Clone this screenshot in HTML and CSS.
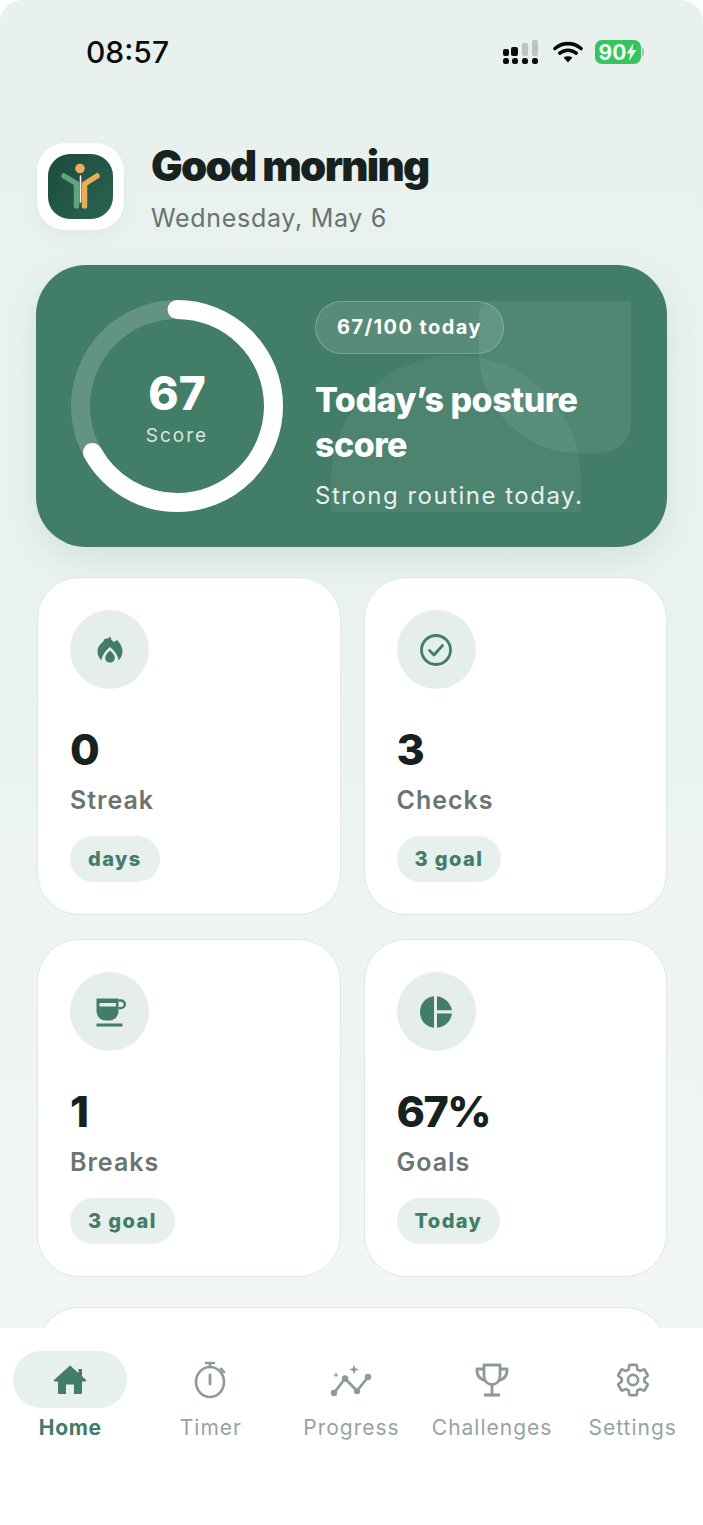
FILE: index.html
```html
<!DOCTYPE html>
<html>
<head>
    <title>Posture Home</title>
    <link rel="stylesheet" href="styles.css">
</head>
<body>
    <div class="screen">
        <div class="content">
            <!-- Status bar -->
            <div class="status">
                <span class="clock">08:57</span>
                <div class="status-icons">
                    <svg width="38" height="26" viewBox="0 0 38 26">
                        <g fill="#0b0b0b">
                            <rect x="1" y="10" width="6" height="7" rx="2"/>
                            <rect x="9" y="8" width="7" height="9" rx="2"/>
                            <rect x="1" y="19" width="6" height="6" rx="2.5"/>
                            <rect x="10" y="19" width="6" height="6" rx="2.5"/>
                            <rect x="20" y="19" width="6" height="6" rx="2.5"/>
                            <rect x="30" y="19" width="6" height="6" rx="2.5"/>
                        </g>
                        <g fill="#bcc4c1">
                            <rect x="20" y="4" width="6" height="13" rx="2"/>
                            <rect x="30" y="1" width="6" height="16" rx="2"/>
                        </g>
                    </svg>
                    <svg class="wifi" width="30" height="24" viewBox="0 0 30 24">
                        <path d="M2 8.5c7.500-6.500 18.500-6.500 26 0M6.800 13.200c4.800-4 11.600-4 16.400 0" fill="none" stroke="#0b0b0b" stroke-width="3.600" stroke-linecap="round"/>
                        <path d="M10.500 17.500c2.800-1.800 6.200-1.800 9 0L15 22.500z" fill="#0b0b0b"/>
                    </svg>
                    <div class="battery">
                        <span class="battery-fill">90<svg width="11" height="18" viewBox="0 0 11 18"><path d="M7.500 0 .5 10.500h3.700L3 18l7.500-11H6.500z" fill="#dff5e5"/></svg></span>
                        <span class="battery-tip"></span>
                    </div>
                </div>
            </div>

            <!-- Greeting -->
            <div class="header">
                <div class="logo-box">
                    <svg class="logo" width="65" height="65" viewBox="0 0 65 65">
                        <defs>
                            <linearGradient id="logo-bg" x1="0" y1="0" x2="1" y2="1">
                                <stop offset="0" stop-color="#1c4a3c"/>
                                <stop offset="1" stop-color="#2a6452"/>
                            </linearGradient>
                        </defs>
                        <rect width="65" height="65" rx="22" fill="url(#logo-bg)"/>
                        <circle cx="32" cy="14.500" r="4.800" fill="#e9ae57"/>
                        <path d="M16 22 28.500 29.500V52" fill="none" stroke="#5fa57f" stroke-width="5.500" stroke-linecap="round" stroke-linejoin="round"/>
                        <path d="M49 22 36.500 30V52" fill="none" stroke="#e9ae57" stroke-width="5.500" stroke-linecap="round" stroke-linejoin="round"/>
                        <path d="M32.500 22V48" stroke="#f4f4ee" stroke-width="1.600" stroke-linecap="round"/>
                    </svg>
                </div>
                <div class="greeting">
                    <h1>Good morning</h1>
                    <p>Wednesday, May 6</p>
                </div>
            </div>

            <!-- Score card -->
            <div class="hero">
                <div class="deco deco-one"></div>
                <div class="deco deco-two"></div>
                <div class="ring">
                    <svg width="212" height="212" viewBox="0 0 212 212">
                        <circle class="ring-track" cx="106" cy="106" r="96.500"/>
                        <circle class="ring-value" cx="106" cy="106" r="96.500" pathLength="100" stroke-dasharray="67 100" transform="rotate(-90 106 106)"/>
                    </svg>
                    <div class="ring-text">
                        <span class="ring-num">67</span>
                        <span class="ring-label">Score</span>
                    </div>
                </div>
                <div class="hero-text">
                    <span class="hero-pill">67/100 today</span>
                    <h2>Today’s posture score</h2>
                    <p>Strong routine today.</p>
                </div>
            </div>

            <!-- Stats -->
            <div class="stats">
                <div class="card">
                    <div class="card-icon">
                        <svg width="30" height="30" viewBox="0 0 30 30">
                            <path d="M15.500 1.500c.3 2.800 1.500 4.600 3.600 5.400l3-1.900c3 3.200 5.400 7 5.400 11.300 0 3.800-1.600 7-4.100 9.200-.1-4.600-3.700-9.800-8.400-13.600-4.700 3.800-8.300 9-8.400 13.600-2.500-2.200-4.100-5.400-4.100-9.200 0-6.500 6.300-9 6.900-12.300 2.400-.2 4.600-1.200 6.100-2.500z" fill="#417d67"/>
                            <path d="M15 15.500c2.700 2.500 4.800 4.900 4.800 7.400 0 2.700-2.100 4.600-4.800 4.600s-4.800-1.900-4.800-4.600c0-2.500 2.100-4.900 4.800-7.400z" fill="#417d67"/>
                        </svg>
                    </div>
                    <div class="card-value">0</div>
                    <div class="card-label">Streak</div>
                    <span class="chip">days</span>
                </div>
                <div class="card">
                    <div class="card-icon">
                        <svg width="34" height="34" viewBox="0 0 34 34">
                            <circle cx="17" cy="17" r="14.500" fill="none" stroke="#417d67" stroke-width="2.800"/>
                            <path d="M10.500 17.500l4.500 4.500 8.500-9.500" fill="none" stroke="#417d67" stroke-width="2.800" stroke-linecap="round" stroke-linejoin="round"/>
                        </svg>
                    </div>
                    <div class="card-value">3</div>
                    <div class="card-label">Checks</div>
                    <span class="chip">3 goal</span>
                </div>
                <div class="card">
                    <div class="card-icon">
                        <svg width="34" height="34" viewBox="0 0 34 34">
                            <path d="M3.500 3.500h22v12c0 6-4 10-9 10h-4c-5 0-9-4-9-10z" fill="#417d67"/>
                            <rect x="6.500" y="8" width="16.500" height="3.500" fill="#e6eeeb"/>
                            <path d="M25.500 5.500h2.500a3.800 3.800 0 0 1 0 7.600h-2.500" fill="none" stroke="#417d67" stroke-width="2.400"/>
                            <rect x="3.500" y="28.500" width="26" height="3" fill="#417d67"/>
                        </svg>
                    </div>
                    <div class="card-value">1</div>
                    <div class="card-label">Breaks</div>
                    <span class="chip">3 goal</span>
                </div>
                <div class="card">
                    <div class="card-icon">
                        <svg width="34" height="34" viewBox="0 0 34 34">
                            <path d="M15 1.200v31.600C7 32 1 25.500 1 17S7 2 15 1.200z" fill="#417d67"/>
                            <path d="M18 1.200C25.500 2 31.500 8 33 15.200H18z" fill="#417d67"/>
                            <path d="M18 18.500h15C32 26 26 32 18 32.800z" fill="#417d67"/>
                        </svg>
                    </div>
                    <div class="card-value">67%</div>
                    <div class="card-label">Goals</div>
                    <span class="chip">Today</span>
                </div>
            </div>
            <div class="card card-next"></div>
        </div>

        <!-- Bottom nav -->
        <div class="nav">
            <div class="nav-item active">
                <div class="nav-icon">
                    <svg width="34" height="32" viewBox="0 0 34 32">
                        <path d="M17 1.500 25.500 9V5h3.500v7.300l4 3.700c.5.600.2 1.400-.6 1.400H29v11.100c0 1-.8 1.500-1.500 1.500H21V20.500h-8V30H6.500C5.800 30 5 29.500 5 28.500V17.400H1.600c-.8 0-1.100-.8-.6-1.400z" fill="#417d67"/>
                    </svg>
                </div>
                <span>Home</span>
            </div>
            <div class="nav-item">
                <div class="nav-icon">
                    <svg width="36" height="38" viewBox="0 0 36 38">
                        <g fill="none" stroke="#8f9a97" stroke-width="2.600" stroke-linecap="round">
                            <ellipse cx="17" cy="21" rx="14" ry="15"/>
                            <path d="M13 2h8M17 2v4M28 8l3 3"/>
                            <path d="M17 14v9" stroke-width="2.800"/>
                        </g>
                    </svg>
                </div>
                <span>Timer</span>
            </div>
            <div class="nav-item">
                <div class="nav-icon">
                    <svg width="42" height="36" viewBox="0 0 42 36">
                        <path d="M4 31 15 16.500 27 29 38 15" fill="none" stroke="#8f9a97" stroke-width="2.800" stroke-linecap="round" stroke-linejoin="round"/>
                        <g fill="#8f9a97">
                            <circle cx="4" cy="31" r="3.200"/>
                            <circle cx="15" cy="16.500" r="3.200"/>
                            <circle cx="27" cy="29" r="3.200"/>
                            <circle cx="38" cy="15" r="3.200"/>
                            <path d="M24 2.500l1.300 3.700L29 7.500l-3.700 1.300L24 12.500l-1.300-3.700L19 7.500l3.700-1.300z"/>
                            <path d="M6 10l.7 2.300 2.300.7-2.300.7L6 16l-.7-2.300L3 13l2.300-.7z"/>
                        </g>
                    </svg>
                </div>
                <span>Progress</span>
            </div>
            <div class="nav-item">
                <div class="nav-icon">
                    <svg width="34" height="34" viewBox="0 0 34 34">
                        <g fill="none" stroke="#8f9a97" stroke-width="2.800" stroke-linejoin="round">
                            <path d="M9 2h16v11c0 5-3.500 8.500-8 8.500S9 18 9 13z"/>
                            <path d="M9 6H2c-.3 6 2.500 10.500 9 11.500M25 6h7c.3 6-2.500 10.500-9 11.500"/>
                            <path d="M17 21.500V31"/>
                            <path d="M9 32h16" stroke-width="3.200"/>
                        </g>
                    </svg>
                </div>
                <span>Challenges</span>
            </div>
            <div class="nav-item">
                <div class="nav-icon">
                    <svg width="38" height="38" viewBox="0 0 24 24">
                        <g fill="none" stroke="#8f9a97" stroke-width="1.700">
                            <path d="M19.140 12.940c.04-.3.06-.61.06-.94 0-.32-.02-.64-.07-.94l2.030-1.580a.49.49 0 0 0 .12-.61l-1.920-3.320a.488.488 0 0 0-.59-.22l-2.390.96c-.5-.38-1.030-.7-1.620-.94l-.36-2.540a.484.484 0 0 0-.48-.41h-3.840c-.24 0-.43.17-.47.41l-.36 2.540c-.59.24-1.130.57-1.620.94l-2.390-.96c-.22-.08-.47 0-.59.22L2.740 8.870c-.12.21-.08.47.12.61l2.030 1.580c-.05.3-.09.63-.09.94s.02.64.07.94l-2.030 1.580a.49.49 0 0 0-.12.61l1.920 3.320c.12.22.37.29.59.22l2.390-.96c.5.38 1.030.7 1.620.94l.36 2.540c.05.24.24.41.48.41h3.840c.24 0 .44-.17.47-.41l.36-2.540c.59-.24 1.130-.56 1.620-.94l2.390.96c.22.08.47 0 .59-.22l1.920-3.320c.12-.22.07-.47-.12-.61l-2.010-1.580z"/>
                            <circle cx="12" cy="12" r="3.200"/>
                        </g>
                    </svg>
                </div>
                <span>Settings</span>
            </div>
        </div>
    </div>
</body>
</html>
```

FILE: styles.css
```css
* {
    box-sizing: border-box;
}
html, body {
    margin: 0;
    height: 100%;
    background: #fff;
    font-family: Inter, "Noto Sans", sans-serif;
}
.screen {
    height: 1525px;
    display: flex;
    flex-direction: column;
    overflow: hidden;
    border-radius: 22px 22px 0 0;
    background: linear-gradient(180deg, #e8f1ee 0%, #e9f2ef 40%, #f2f6f4 86%);
}
.content {
    flex: 1;
    min-height: 0;
    overflow: hidden;
    padding: 0 36px;
}

/* Status bar */
.status {
    height: 104px;
    display: flex;
    align-items: center;
    justify-content: space-between;
    padding: 0 23px 0 50px;
}
.clock {
    font-size: 30px;
    font-weight: 500;
    color: #0b0b0b;
}
.status-icons {
    display: flex;
    align-items: center;
    gap: 12px;
}
.wifi {
    margin-left: 1px;
}
.battery {
    display: flex;
    align-items: center;
    gap: 1px;
}
.battery-fill {
    width: 46px;
    height: 24px;
    border-radius: 7px;
    background: #35c45f;
    color: #f2fbf4;
    font-size: 21px;
    font-weight: 700;
    display: flex;
    align-items: center;
    justify-content: center;
}
.battery-tip {
    width: 2px;
    height: 8px;
    border-radius: 0 2px 2px 0;
    background: #b5bdba;
}

/* Greeting */
.header {
    margin-top: 39px;
    display: flex;
    align-items: flex-start;
    gap: 27px;
    padding-left: 1px;
}
.logo-box {
    width: 87px;
    height: 87px;
    border-radius: 28px;
    background: #fff;
    display: flex;
    align-items: center;
    justify-content: center;
    box-shadow: 0 4px 14px rgba(65, 125, 103, 0.06);
}
.logo {
    display: block;
}
.greeting h1 {
    margin: 0;
    font-size: 42px;
    line-height: 46px;
    font-weight: 900;
    letter-spacing: -1.7px;
    color: #17211e;
}
.greeting p {
    margin: 14px 0 0;
    font-size: 25px;
    line-height: 30px;
    letter-spacing: 0.7px;
    color: #66736f;
}

/* Score card */
.hero {
    margin-top: 32px;
    height: 282px;
    position: relative;
    overflow: hidden;
    border-radius: 50px;
    background: #417d67;
    box-shadow: 0 12px 30px rgba(65, 125, 103, 0.12);
    display: flex;
    align-items: center;
    gap: 32px;
    padding-left: 35px;
}
.deco {
    position: absolute;
}
.deco-one {
    left: 443px;
    top: 36px;
    width: 152px;
    height: 152px;
    border-radius: 12px 0 30px 100px;
    background: rgba(255, 255, 255, 0.08);
}
.deco-two {
    left: 295px;
    top: 90px;
    width: 250px;
    height: 157px;
    border-radius: 125px 125px 4px 4px;
    background: rgba(255, 255, 255, 0.06);
}
.ring {
    display: grid;
    flex: none;
    position: relative;
}
.ring svg, .ring-text {
    grid-area: 1 / 1;
}
.ring svg {
    display: block;
}
.ring-track, .ring-value {
    fill: none;
    stroke-width: 19;
}
.ring-track {
    stroke: rgba(255, 255, 255, 0.18);
}
.ring-value {
    stroke: #fff;
    stroke-linecap: round;
}
.ring-text {
    display: flex;
    flex-direction: column;
    align-items: center;
    justify-content: center;
    color: #fff;
}
.ring-num {
    font-size: 46px;
    line-height: 50px;
    font-weight: 800;
    margin-top: 3px;
}
.ring-label {
    font-size: 19px;
    line-height: 24px;
    letter-spacing: 2px;
    margin-top: 6px;
    color: rgba(255, 255, 255, 0.82);
}
.hero-text {
    position: relative;
    width: 290px;
    color: #fff;
}
.hero-pill {
    display: inline-block;
    height: 53px;
    line-height: 51px;
    padding: 0 21px;
    border: 1px solid rgba(255, 255, 255, 0.2);
    border-radius: 27px;
    background: rgba(255, 255, 255, 0.12);
    font-size: 20px;
    font-weight: 700;
    letter-spacing: 1.4px;
}
.hero-text h2 {
    margin: 23px 0 0;
    font-size: 34px;
    line-height: 45px;
    font-weight: 800;
    letter-spacing: -0.5px;
}
.hero-text p {
    margin: 14px 0 0;
    font-size: 24px;
    line-height: 30px;
    letter-spacing: 1.5px;
    white-space: nowrap;
    color: rgba(255, 255, 255, 0.9);
}

/* Stats */
.stats {
    margin-top: 30px;
    padding-left: 1px;
    display: grid;
    grid-template-columns: 1fr 1fr;
    grid-auto-rows: 338px;
    gap: 24px 23px;
}
.card {
    background: #fff;
    border: 1px solid #dfe8e5;
    border-radius: 42px;
    padding: 32px;
}
.card-icon {
    width: 79px;
    height: 79px;
    border-radius: 50%;
    background: #e6eeeb;
    display: flex;
    align-items: center;
    justify-content: center;
}
.card-value {
    margin-top: 36px;
    font-size: 43px;
    line-height: 48px;
    font-weight: 800;
    letter-spacing: -1.5px;
    color: #17211e;
}
.card-label {
    margin-top: 12px;
    font-size: 25px;
    line-height: 30px;
    font-weight: 600;
    letter-spacing: 1px;
    color: #6a7572;
}
.chip {
    display: inline-block;
    margin-top: 21px;
    height: 46px;
    line-height: 46px;
    padding: 0 18px;
    border-radius: 23px;
    background: #e7f0ed;
    font-size: 20px;
    font-weight: 800;
    letter-spacing: 1.4px;
    color: #417d67;
}
.card-next {
    margin: 30px 0 0 1px;
    height: 200px;
}

/* Bottom nav */
.nav {
    flex: none;
    height: 197px;
    background: #fff;
    display: grid;
    grid-template-columns: repeat(5, 1fr);
    padding-top: 23px;
}
.nav-item {
    display: flex;
    flex-direction: column;
    align-items: center;
    font-size: 21px;
    line-height: 26px;
    letter-spacing: 1px;
    color: #98a3a0;
    white-space: nowrap;
}
.nav-icon {
    width: 114px;
    height: 57px;
    border-radius: 28px;
    display: flex;
    align-items: center;
    justify-content: center;
    margin-bottom: 7px;
}
.nav-item.active {
    font-weight: 700;
    letter-spacing: 0.7px;
    color: #417d67;
}
.active .nav-icon {
    background: #e6f0ed;
}
```
